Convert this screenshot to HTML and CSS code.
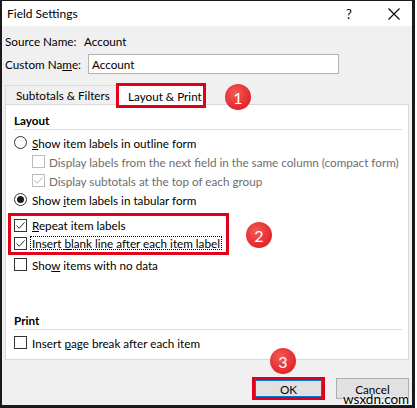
FILE: index.html
```html
<!DOCTYPE html>
<html lang="en">
<head>
<meta charset="utf-8">
<title>Field Settings</title>
<link rel="stylesheet" href="styles.css">
</head>
<body>
<div class="dialog">
  <div class="titlebar">
    <span class="title">Field Settings</span>
    <span class="help">?</span>
    <span class="close"><svg width="12" height="12" viewBox="0 0 12 12"><path d="M0.5 0.5 L11.5 11.5 M11.5 0.5 L0.5 11.5" stroke="#000" stroke-width="1.1" fill="none"/></svg></span>
  </div>
  <div class="content">
    <div class="name-row">
      <span class="lbl lbl-source">Source Name:</span>
      <span class="val">Account</span>
    </div>
    <div class="name-row custom">
      <span class="lbl lbl-custom">Custom Na<u>m</u>e:</span>
      <div class="input">Account</div>
    </div>
    <div class="tabs">
      <div class="tab">Subtotals &amp; Filters</div>
      <div class="tab active">Layout &amp; Print</div>
    </div>
    <div class="panel">
      <div class="section-title">Layout</div>
      <div class="sep"></div>
      <div class="opt"><span class="radio"></span><span><u>S</u>how item labels in outline form</span></div>
      <div class="opt indent disabled"><span class="check"></span><span>Display labels from the next field in the same column (compact form)</span></div>
      <div class="opt indent disabled"><span class="check"><svg width="11" height="11" viewBox="0 0 11 11"><path d="M1.5 5.5 L4.2 8.3 L9.6 2.4" fill="none" stroke="#b4b4b4" stroke-width="1"/></svg></span><span>Display subtotals at the top of each group</span></div>
      <div class="opt"><span class="radio on"></span><span>Show <u>i</u>tem labels in tabular form</span></div>
      <div class="highlight">
        <div class="opt tight"><span class="check"><svg width="11" height="11" viewBox="0 0 11 11"><path d="M1.5 5.5 L4.2 8.3 L9.6 2.4" fill="none" stroke="#333" stroke-width="1"/></svg></span><span><u>R</u>epeat item labels</span></div>
        <div class="opt tight"><span class="check"><svg width="11" height="11" viewBox="0 0 11 11"><path d="M1.5 5.5 L4.2 8.3 L9.6 2.4" fill="none" stroke="#333" stroke-width="1"/></svg></span><span class="focus">Insert <u>b</u>lank line after each item label</span></div>
      </div>
      <div class="opt"><span class="check"></span><span>Sho<u>w</u> items with no data</span></div>
      <div class="section-title print">Print</div>
      <div class="sep"></div>
      <div class="opt"><span class="check"></span><span>Insert <u>p</u>age break after each item</span></div>
    </div>
    <div class="buttons">
      <div class="btn ok">OK</div>
      <div class="btn">Cancel</div>
    </div>
  </div>
  <span class="badge b1">1</span>
  <span class="badge b2">2</span>
  <span class="badge b3">3</span>
  <span class="watermark">wsxdn.com</span>
</div>
</body>
</html>
```
FILE: styles.css
```css
* { box-sizing: border-box; }
html, body { margin: 0; padding: 0; background: #fff; }
body {
  font-family: Lato, "Open Sans", sans-serif;
  font-size: 11.7px;
  color: #000;
}
.dialog {
  position: relative;
  width: 415px;
  height: 408px;
  border-style: solid;
  border-color: #1a1a1a;
  border-width: 1px 3px 3px 2px;
  background: #f0f0f0;
  display: flex;
  flex-direction: column;
}
.titlebar {
  height: 25px;
  background: #fff;
  display: flex;
  align-items: center;
  padding-left: 5px;
}
.title { flex: 1; font-size: 12px; }
.help { width: 12px; margin-right: 30px; font-size: 13px; }
.close { width: 12px; margin-right: 12px; display: flex; }
.content { padding: 0 3px; display: flex; flex-direction: column; }
.name-row { display: flex; align-items: center; height: 20px; margin-top: 5px; }
.name-row.custom { margin-top: 3px; }
.lbl-source { width: 79px; }
.lbl-custom { width: 83px; }
.input {
  width: 251px; height: 20px; background: #fff;
  border: 1px solid #b4b4b4; padding-left: 3px;
  display: flex; align-items: center;
}
.tabs { display: flex; align-items: flex-start; height: 21px; margin-top: 9px; }
.tab {
  height: 19px; margin-top: 2px; padding-left: 10px; width: 111px;
  border-left: 1px solid #dadada; border-top: 1px solid #dadada;
  display: flex; align-items: center; white-space: nowrap;
}
.tab.active {
  position: relative; z-index: 2;
  width: 90px; height: 25px; margin-top: 0;
  padding-left: 9px;
  border: 3px solid #e1001a;
  background: #fff;
}
.panel {
  height: 256px; background: #fff;
  border: 1px solid #d9d9d9;
  padding: 7px 6px 0 8px;
  display: flex; flex-direction: column;
}
.section-title { font-weight: 700; height: 16px; display: flex; align-items: center; }
.section-title.print { margin-top: 38px; }
.sep { height: 1px; background: #dcdcdc; margin-top: 1px; margin-bottom: 3px; }
.opt { height: 19px; display: flex; align-items: center; white-space: nowrap; }
.opt.tight { height: 18px; }
.opt.indent { padding-left: 18px; }
.opt.indent .check { margin-right: 4px; }
.radio {
  width: 13px; height: 13px; border-radius: 50%;
  border: 1px solid #333; background: #fff;
  margin-right: 5px; flex: none;
  display: flex; align-items: center; justify-content: center;
}
.radio.on::after {
  content: ""; width: 7px; height: 7px; border-radius: 50%; background: #1a1a1a;
}
.check {
  width: 13px; height: 13px; border: 1px solid #333; background: #fff;
  margin-right: 5px; flex: none; display: flex;
}
.disabled { color: #6d6d6d; }
.disabled .check { border-color: #bcbcbc; }
.highlight {
  margin: 4px 0 0 -6px; width: 221px;
  border: 3px solid #e1001a;
  padding-left: 3px;
}
.focus { border: 1px dotted #000; margin-left: -2px; padding: 0 1px; line-height: 12px; }
.buttons { display: flex; justify-content: flex-end; gap: 11px; margin-top: 18px; }
.btn {
  width: 73px; height: 21px; background: #e1e1e1; border: 1px solid #adadad;
  display: flex; align-items: center; justify-content: center;
}
.btn.ok { border: 3px solid #e1001a; box-shadow: inset 0 0 0 1px #0078d7; height: 23px; margin-top: -1px; }
.badge {
  position: absolute; width: 26px; height: 26px; border-radius: 50%;
  background: radial-gradient(circle at 40% 35%, #f35a57, #e2262c 70%);
  color: #fff; font-size: 16px;
  display: flex; align-items: center; justify-content: center;
}
.b1 { left: 223px; top: 83px; }
.b2 { left: 244px; top: 221px; }
.b3 { left: 268px; top: 347px; }
.watermark {
  position: absolute; left: 341px; top: 390px; font-size: 13.5px; color: #000;
  text-shadow: 0 0 2px #fff, 0 0 2px #fff;
}
```
